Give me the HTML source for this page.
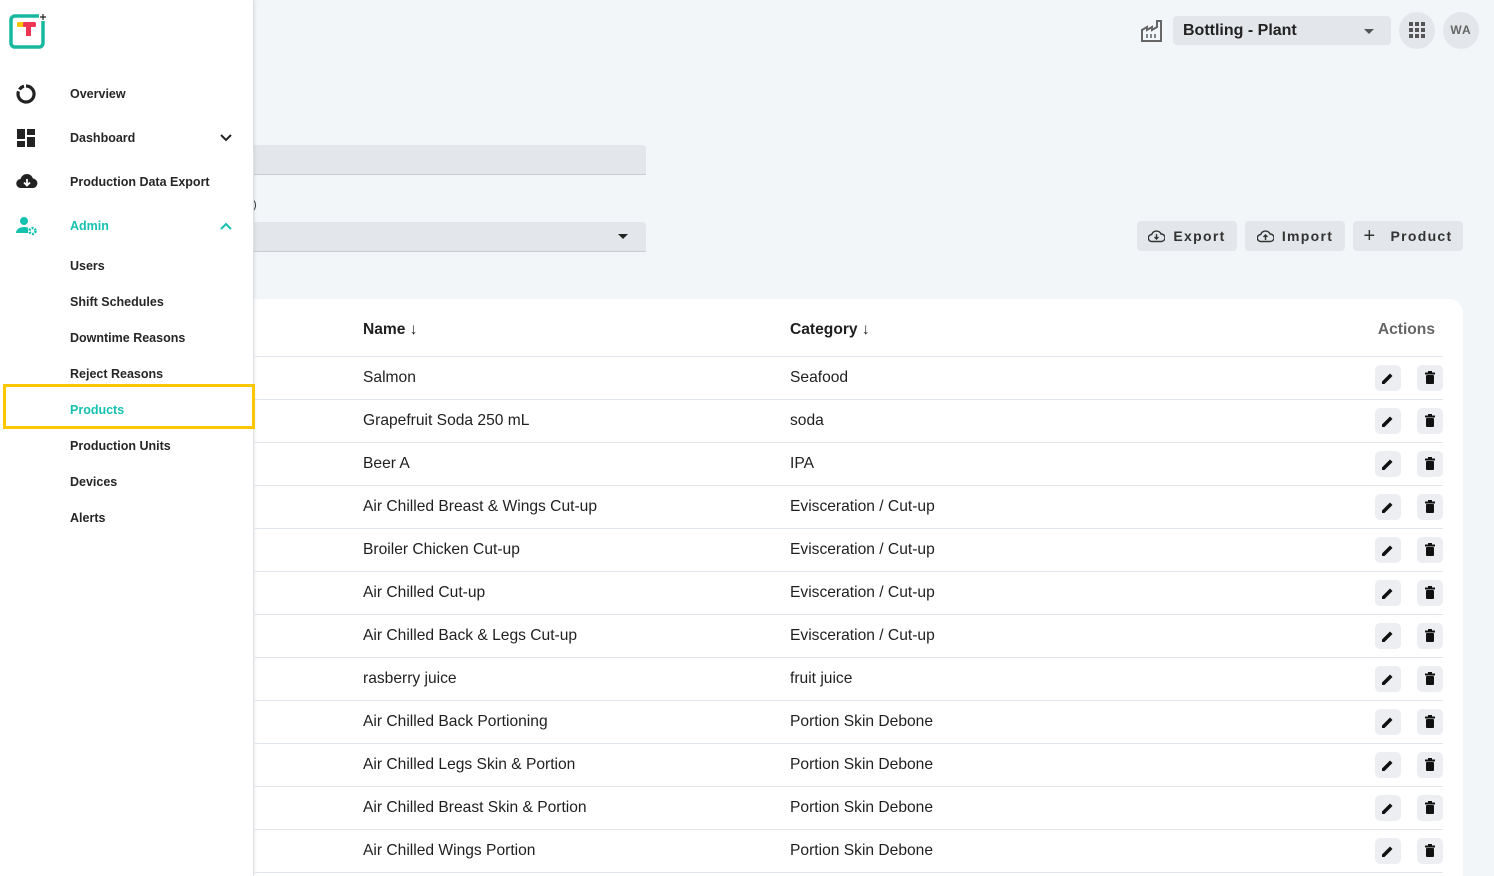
<!DOCTYPE html>
<html style="width:1494px;height:876px;overflow:hidden"><head><meta charset="utf-8"><style>
*{box-sizing:border-box;margin:0;padding:0}
body{width:1494px;height:876px;overflow:hidden;background:#f3f6f9;font-family:"Liberation Sans",Arial,sans-serif;color:#1f1f1f;position:relative}
.side{position:absolute;left:0;top:0;width:254px;height:876px;background:#fff;border-right:1px solid #dcdfe4;box-shadow:1px 0 3px rgba(0,0,0,.08);z-index:5}
.item{position:absolute;left:70px;font-size:12.5px;font-weight:bold;color:#262626;letter-spacing:0}
.ico{position:absolute;left:16px}
.card{position:absolute;left:230px;top:299px;width:1233px;height:577px;background:#fff;border-radius:14px 14px 0 0}
.row{position:absolute;left:255px;width:1188px;height:43px;border-bottom:1px solid #e1e5ee;font-size:15.6px}
.row span{position:absolute;top:12px}
.btn{position:absolute;width:26px;height:26px;border-radius:5px;background:#eceef1;top:8px}
.tb{position:absolute;top:221px;height:30px;background:#e3e6ea;border-radius:4px;font-size:14px;font-weight:bold;letter-spacing:1.3px;color:#333;display:flex;align-items:center;justify-content:center;gap:8px}
</style></head><body>
<div class="side">
<svg style="position:absolute;left:9px;top:13px" width="40" height="36" viewBox="0 0 40 36"><rect x="2" y="3" width="32" height="31" rx="4" fill="none" stroke="#17b8a0" stroke-width="3.5"/><rect x="8" y="9" width="10" height="5" rx="1.5" fill="#f5c400"/><rect x="14" y="9" width="13" height="5" rx="1.5" fill="#ee3554"/><rect x="17" y="9" width="5" height="14" fill="#ee3554"/><rect x="30" y="0" width="8" height="8" fill="#fff"/><path d="M34 1v6M31 4h6" stroke="#222" stroke-width="1.2"/></svg>
<svg class="ico" style="top:84px" width="20" height="20" viewBox="0 0 20 20"><path d="M10 2a8 8 0 1 1-7.5 5.3" fill="none" stroke="#222" stroke-width="3.2"/><path d="M3.5 5.5A8 8 0 0 1 8 2.2" fill="none" stroke="#222" stroke-width="3.2"/></svg>
<div class="item" style="top:87px">Overview</div>
<svg class="ico" style="top:128px" width="20" height="20" viewBox="0 0 20 20"><rect x="1" y="1" width="8" height="10" fill="#222"/><rect x="11" y="1" width="8" height="6" fill="#222"/><rect x="1" y="13" width="8" height="6" fill="#222"/><rect x="11" y="9" width="8" height="10" fill="#222"/></svg>
<div class="item" style="top:131px">Dashboard</div>
<svg style="position:absolute;left:219px;top:133px" width="14" height="10" viewBox="0 0 14 10"><path d="M2 2l5 5 5-5" fill="none" stroke="#222" stroke-width="2"/></svg>
<svg class="ico" style="top:172px" width="22" height="18" viewBox="0 0 22 18"><path d="M5 16a4.5 4.5 0 0 1-.5-9A6.5 6.5 0 0 1 17 6.5a4.8 4.8 0 0 1 .5 9.5z" fill="#222"/><path d="M11 7v6M8 10.5l3 3 3-3" fill="none" stroke="#fff" stroke-width="1.8"/></svg>
<div class="item" style="top:175px">Production Data Export</div>
<svg class="ico" style="top:216px" width="22" height="20" viewBox="0 0 22 20"><circle cx="8" cy="5" r="4" fill="#17c1b0"/><path d="M0 17c0-4 4-6 8-6 2 0 3 .3 4 .7V17z" fill="#17c1b0"/><circle cx="16.5" cy="15" r="3" fill="none" stroke="#17c1b0" stroke-width="2.5" stroke-dasharray="2 1.2"/></svg>
<div class="item" style="top:219px;color:#17c1b0">Admin</div>
<svg style="position:absolute;left:219px;top:221px" width="14" height="10" viewBox="0 0 14 10"><path d="M2 8l5-5 5 5" fill="none" stroke="#17c1b0" stroke-width="2"/></svg>
<div class="item" style="top:259px">Users</div>
<div class="item" style="top:295px">Shift Schedules</div>
<div class="item" style="top:331px">Downtime Reasons</div>
<div class="item" style="top:367px">Reject Reasons</div>
<div style="position:absolute;left:3px;top:384px;width:252px;height:45px;border:3px solid #fbc700"></div>
<div class="item" style="top:403px;color:#17c1b0">Products</div>
<div class="item" style="top:439px">Production Units</div>
<div class="item" style="top:475px">Devices</div>
<div class="item" style="top:511px">Alerts</div>
</div>

<svg style="position:absolute;left:1141px;top:20px" width="22" height="22" viewBox="0 0 22 22"><path d="M1 21V10l5-3v3l5-3v3l5-3V1h4v20z" fill="none" stroke="#666" stroke-width="2"/><path d="M6 14v4M10 14v4M14 14v4" stroke="#666" stroke-width="1.6"/></svg>
<div style="position:absolute;left:1173px;top:16px;width:218px;height:29px;background:#e3e6ea;border-radius:4px;font-size:16px;font-weight:bold;padding:6px 10px;color:#222">Bottling - Plant</div>
<div style="position:absolute;left:1364px;top:29px;border:5px solid transparent;border-top-color:#555;border-bottom:0"></div>
<div style="position:absolute;left:1399px;top:12px;width:36px;height:37px;border-radius:50%;background:#e3e6ea"></div>
<svg style="position:absolute;left:1409px;top:22px" width="16" height="16" viewBox="0 0 16 16" fill="#555"><rect x="0" y="0" width="4" height="4"/><rect x="6" y="0" width="4" height="4"/><rect x="12" y="0" width="4" height="4"/><rect x="0" y="6" width="4" height="4"/><rect x="6" y="6" width="4" height="4"/><rect x="12" y="6" width="4" height="4"/><rect x="0" y="12" width="4" height="4"/><rect x="6" y="12" width="4" height="4"/><rect x="12" y="12" width="4" height="4"/></svg>
<div style="position:absolute;left:1443px;top:12px;width:36px;height:37px;border-radius:50%;background:#e3e6ea;font-size:12px;font-weight:bold;color:#666;letter-spacing:1px;text-align:center;line-height:37px">WA</div>

<div style="position:absolute;left:240px;top:145px;width:406px;height:30px;background:#e3e6ea;border-bottom:1px solid #c8ccd3;border-radius:4px 4px 0 0"></div>
<div style="position:absolute;left:253px;top:199px;font-size:11px;color:#333">)</div>
<div style="position:absolute;left:240px;top:222px;width:406px;height:30px;background:#e3e6ea;border-bottom:1px solid #c8ccd3;border-radius:4px 4px 0 0"></div>
<div style="position:absolute;left:618px;top:234px;border:5px solid transparent;border-top-color:#222;border-bottom:0"></div>

<div class="tb" style="left:1137px;width:100px"><svg width="17" height="14" viewBox="0 0 17 14"><path d="M4 12.5a3.5 3.5 0 0 1-.3-7A5 5 0 0 1 13 5a3.7 3.7 0 0 1 .5 7.5z M8.5 5v5M6.5 8l2 2 2-2" fill="none" stroke="#333" stroke-width="1.4"/></svg>Export</div>
<div class="tb" style="left:1245px;width:100px"><svg width="17" height="14" viewBox="0 0 17 14"><path d="M4 12.5a3.5 3.5 0 0 1-.3-7A5 5 0 0 1 13 5a3.7 3.7 0 0 1 .5 7.5z M8.5 11V6M6.5 8l2-2 2 2" fill="none" stroke="#333" stroke-width="1.4"/></svg>Import</div>
<div class="tb" style="left:1353px;width:110px"><span style="font-size:20px;font-weight:normal;margin-right:6px">+</span>Product</div>

<div class="card"></div>
<div class="row" style="top:313px;font-weight:bold;height:44px"><span style="left:108px;top:8px">Name ↓</span><span style="left:535px;top:8px">Category ↓</span><span style="right:8px;top:8px;color:#666">Actions</span></div>
<div id="rows"></div>
<script>
var d=[["Salmon","Seafood"],["Grapefruit Soda 250 mL","soda"],["Beer A","IPA"],["Air Chilled Breast & Wings Cut-up","Evisceration / Cut-up"],["Broiler Chicken Cut-up","Evisceration / Cut-up"],["Air Chilled Cut-up","Evisceration / Cut-up"],["Air Chilled Back & Legs Cut-up","Evisceration / Cut-up"],["rasberry juice","fruit juice"],["Air Chilled Back Portioning","Portion Skin Debone"],["Air Chilled Legs Skin & Portion","Portion Skin Debone"],["Air Chilled Breast Skin & Portion","Portion Skin Debone"],["Air Chilled Wings Portion","Portion Skin Debone"]];
var h="";d.forEach(function(r,i){h+='<div class="row" style="top:'+(357+i*43)+'px"><span style="left:108px">'+r[0].replace(/&/g,"&amp;")+'</span><span style="left:535px">'+r[1]+'</span><div class="btn" style="left:1120px"><svg style="position:absolute;left:7px;top:7px" width="12" height="12" viewBox="0 0 12 12"><path d="M0 12V9.5L8 1.5 10.5 4 2.5 12z" fill="#111"/></svg></div><div class="btn" style="left:1162px"><svg style="position:absolute;left:8px;top:6px" width="10" height="13" viewBox="0 0 10 13"><rect x="0" y="1.5" width="10" height="2" fill="#111"/><rect x="3" y="0" width="4" height="2" fill="#111"/><rect x="1" y="4" width="8" height="9" rx="1" fill="#111"/></svg></div></div>'});
document.getElementById("rows").innerHTML=h;
</script>
</body></html>
